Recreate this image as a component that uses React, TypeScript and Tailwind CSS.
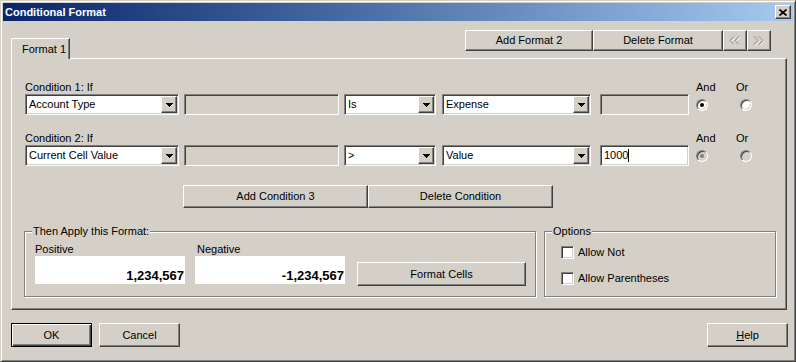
import React from 'react';

const raised =
  'bg-[#D4D0C8] border border-t-white border-l-white border-r-[#404040] border-b-[#404040] shadow-[inset_-1px_-1px_0_#808080]';
const sunken =
  'border border-t-[#808080] border-l-[#808080] border-r-white border-b-white shadow-[inset_1px_1px_0_#404040,inset_-1px_-1px_0_#D4D0C8]';

function DropButton() {
  return (
    <span className={`${raised} w-[16px] h-[17px] flex items-center justify-center shrink-0`}>
      <svg width="7" height="4" viewBox="0 0 7 4" shapeRendering="crispEdges">
        <rect x="0" y="0" width="7" height="1" fill="#000" />
        <rect x="1" y="1" width="5" height="1" fill="#000" />
        <rect x="2" y="2" width="3" height="1" fill="#000" />
        <rect x="3" y="3" width="1" height="1" fill="#000" />
      </svg>
    </span>
  );
}

function Combo({ value, w }: { value: string; w: string }) {
  return (
    <div className={`${sunken} ${w} h-[21px] bg-white p-[1px] flex shrink-0`}>
      <span className="flex-1 pl-[2px] leading-[17px] whitespace-nowrap overflow-hidden">{value}</span>
      <DropButton />
    </div>
  );
}

function Field({ w, value, caret }: { w: string; value?: string; caret?: boolean }) {
  return (
    <div
      className={`${sunken} ${w} h-[21px] shrink-0 flex items-center pl-[3px] ${value ? 'bg-white' : 'bg-[#D4D0C8]'}`}
    >
      {value && <span className="leading-[17px]">{value}</span>}
      {caret && <span className="w-[1px] h-[13px] bg-black" />}
    </div>
  );
}

function Radio({ checked, disabled }: { checked?: boolean; disabled?: boolean }) {
  return (
    <span
      className={`w-[12px] h-[12px] rounded-full border border-t-[#808080] border-l-[#808080] border-r-white border-b-white shadow-[inset_1px_1px_0_#404040,inset_-1px_-1px_0_#D4D0C8] flex items-center justify-center shrink-0 ${
        disabled ? 'bg-[#D4D0C8]' : 'bg-white'
      }`}
    >
      {checked && <span className={`w-[4px] h-[4px] rounded-full ${disabled ? 'bg-[#808080]' : 'bg-black'}`} />}
    </span>
  );
}

function Checkbox({ label }: { label: string }) {
  return (
    <div className="flex items-center h-[13px]">
      <span className={`${sunken} w-[13px] h-[13px] bg-white shrink-0`} />
      <span className="ml-[4px] leading-[13px]">{label}</span>
    </div>
  );
}

function Button({ label, w, h, def }: { label: React.ReactNode; w: string; h: string; def?: boolean }) {
  const cls = def
    ? 'bg-[#D4D0C8] border border-black shadow-[inset_1px_1px_0_#fff,inset_-1px_-1px_0_#404040,inset_-2px_-2px_0_#808080]'
    : raised;
  return <div className={`${cls} ${w} ${h} flex items-center justify-center shrink-0`}>{label}</div>;
}

function Chevrons({ dir }: { dir: 'left' | 'right' }) {
  const pts =
    dir === 'left'
      ? ['5,0.5 1,4.5 5,8.5', '10,0.5 6,4.5 10,8.5']
      : ['1,0.5 5,4.5 1,8.5', '6,0.5 10,4.5 6,8.5'];
  return (
    <svg width="12" height="10" viewBox="0 0 12 10">
      {pts.map((p, i) => (
        <polyline key={`w${i}`} points={p} fill="none" stroke="#fff" strokeWidth="1" transform="translate(1,1)" />
      ))}
      {pts.map((p, i) => (
        <polyline key={`g${i}`} points={p} fill="none" stroke="#808080" strokeWidth="1" />
      ))}
    </svg>
  );
}

function Group({ title, w, children }: { title: string; w: string; children: React.ReactNode }) {
  return (
    <div className={`relative ${w} h-[66px] border border-[#808080] shadow-[inset_1px_1px_0_#fff,1px_1px_0_#fff] shrink-0`}>
      <span className="absolute -top-[7px] left-[7px] px-[1px] bg-[#D4D0C8] leading-[13px]">{title}</span>
      {children}
    </div>
  );
}

export default function App() {
  return (
    <div className="w-[796px] h-[362px] bg-[#D4D0C8] border border-t-[#D4D0C8] border-l-[#D4D0C8] border-r-[#404040] border-b-[#404040] shadow-[inset_1px_1px_0_#fff,inset_-1px_-1px_0_#808080] p-[2px] font-['Liberation_Sans',Arial,sans-serif] text-[11px] leading-[13px] text-black overflow-hidden">
      {/* Title bar */}
      <div className="h-[18px] bg-linear-to-r from-[#0A246A] to-[#A6CAF0] flex items-center justify-between pl-[2px] pr-[2px]">
        <span className="text-white font-bold text-[11px]">Conditional Format</span>
        <span className={`${raised} w-[16px] h-[14px] flex items-center justify-center`}>
          <svg width="8" height="7" viewBox="0 0 8 7">
            <path d="M0.5 0.5 L7.5 6.5 M7.5 0.5 L0.5 6.5" stroke="#000" strokeWidth="1.7" />
          </svg>
        </span>
      </div>

      {/* Tabs + format buttons */}
      <div className="pl-[8px] pr-[6px]">
        <div className="flex items-start justify-between h-[37px]">
          <div className="relative z-10 mt-[17px] h-[21px] w-[59px] bg-[#D4D0C8] border-t border-l border-t-white border-l-white border-r border-r-[#404040] shadow-[inset_-1px_0_0_#808080] rounded-tl-[2px] pl-[10px] pt-[4px]">
            Format 1
          </div>
          <div className="flex mt-[9px] mr-[16px]">
            <Button label="Add Format 2" w="w-[128px]" h="h-[21px]" />
            <Button label="Delete Format" w="w-[130px]" h="h-[21px]" />
            <Button label={<Chevrons dir="left" />} w="w-[24px]" h="h-[21px]" />
            <Button label={<Chevrons dir="right" />} w="w-[24px]" h="h-[21px]" />
          </div>
        </div>

        {/* Tab panel */}
        <div className="h-[252px] border border-t-white border-l-white border-r-[#404040] border-b-[#404040] shadow-[inset_-1px_-1px_0_#808080] pl-[13px] pt-[21px]">
          {/* Condition 1 */}
          <div className="flex h-[14px] leading-[14px]">
            <span className="w-[671px]">Condition 1: If</span>
            <span className="w-[40px]">And</span>
            <span>Or</span>
          </div>
          <div className="flex items-center h-[21px]">
            <Combo value="Account Type" w="w-[154px]" />
            <div className="ml-[5px]"><Field w="w-[155px]" /></div>
            <div className="ml-[5px]"><Combo value="Is" w="w-[92px]" /></div>
            <div className="ml-[6px]"><Combo value="Expense" w="w-[149px]" /></div>
            <div className="ml-[9px]"><Field w="w-[89px]" /></div>
            <div className="ml-[7px]"><Radio checked /></div>
            <div className="ml-[32px]"><Radio /></div>
          </div>

          {/* Condition 2 */}
          <div className="flex h-[14px] leading-[14px] mt-[16px]">
            <span className="w-[671px]">Condition 2: If</span>
            <span className="w-[40px]">And</span>
            <span>Or</span>
          </div>
          <div className="flex items-center h-[21px]">
            <Combo value="Current Cell Value" w="w-[154px]" />
            <div className="ml-[5px]"><Field w="w-[155px]" /></div>
            <div className="ml-[5px]"><Combo value=">" w="w-[92px]" /></div>
            <div className="ml-[6px]"><Combo value="Value" w="w-[149px]" /></div>
            <div className="ml-[9px]"><Field w="w-[89px]" value="1000" caret /></div>
            <div className="ml-[7px]"><Radio checked disabled /></div>
            <div className="ml-[32px]"><Radio disabled /></div>
          </div>

          {/* Condition buttons */}
          <div className="flex mt-[19px] ml-[158px]">
            <Button label="Add Condition 3" w="w-[185px]" h="h-[23px]" />
            <Button label="Delete Condition" w="w-[185px]" h="h-[23px]" />
          </div>

          {/* Format + options */}
          <div className="flex mt-[23px] -ml-[1px]">
            <Group title="Then Apply this Format:" w="w-[512px]">
              <div className="flex items-start pl-[10px] pt-[10px]">
                <div className="flex flex-col w-[150px]">
                  <span className="h-[14px] leading-[14px]">Positive</span>
                  <div className="h-[28px] bg-white flex items-end justify-end pr-[1px] pb-[1px]">
                    <span className="font-bold text-[13px] leading-[15px]">1,234,567</span>
                  </div>
                </div>
                <div className="flex flex-col w-[150px] ml-[10px]">
                  <span className="h-[14px] leading-[14px] pl-[2px]">Negative</span>
                  <div className="h-[28px] bg-white flex items-end justify-end pr-[1px] pb-[1px]">
                    <span className="font-bold text-[13px] leading-[15px]">-1,234,567</span>
                  </div>
                </div>
                <div className="ml-[12px] mt-[20px]">
                  <Button label="Format Cells" w="w-[169px]" h="h-[24px]" />
                </div>
              </div>
            </Group>
            <div className="ml-[8px]">
              <Group title="Options" w="w-[232px]">
                <div className="flex flex-col pl-[16px] pt-[14px] gap-[13px]">
                  <Checkbox label="Allow Not" />
                  <Checkbox label="Allow Parentheses" />
                </div>
              </Group>
            </div>
          </div>
        </div>

        {/* Dialog buttons */}
        <div className="flex items-center mt-[13px] pr-[-1px]">
          <Button label="OK" w="w-[81px]" h="h-[24px]" def />
          <div className="ml-[7px]">
            <Button label="Cancel" w="w-[81px]" h="h-[24px]" />
          </div>
          <div className="ml-auto -mr-[1px]">
            <Button
              label={
                <span>
                  <span className="underline">H</span>elp
                </span>
              }
              w="w-[81px]"
              h="h-[24px]"
            />
          </div>
        </div>
      </div>
    </div>
  );
}
